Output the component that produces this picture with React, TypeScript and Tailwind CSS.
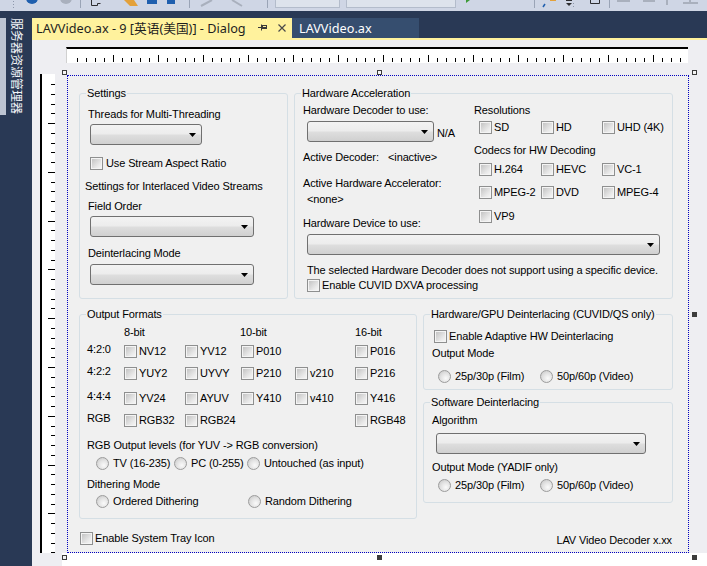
import type { ReactNode } from "react";

// Windows 7 style dialog controls, drawn at 96dpi sizes
function Check({ label, className = "", gap = "gap-[2px]" }: { label?: string; className?: string; gap?: string }) {
  return (
    <div className={`flex items-center ${gap} ${className}`}>
      <span className="w-[13px] h-[13px] shrink-0 border border-[#8e8f8f] bg-[#f4f4f4] p-[1px]">
        <span className="block w-full h-full bg-[linear-gradient(135deg,#c4c4c4,#e9e9e9_70%,#f4f4f4)]" />
      </span>
      {label && <span className="leading-[13px] whitespace-nowrap">{label}</span>}
    </div>
  );
}

function Radio({ label, className = "" }: { label: string; className?: string }) {
  return (
    <div className={`flex items-center gap-[4px] ${className}`}>
      <span className="w-[13px] h-[13px] shrink-0 rounded-full border border-[#9c9c9c] bg-[radial-gradient(circle_at_62%_66%,#fafafa_0%,#e2e2e2_50%,#c2c2c2_100%)]" />
      <span className="leading-[13px] whitespace-nowrap">{label}</span>
    </div>
  );
}

function Combo({ className = "" }: { className?: string }) {
  return (
    <div
      className={`h-[21px] rounded-[3px] border border-[#707070] bg-[linear-gradient(#f3f3f3,#ececec_48%,#dedede_52%,#d0d0d0)] flex items-center justify-end pr-[5px] ${className}`}
    >
      <svg width="7" height="4" viewBox="0 0 7 4" className="block">
        <path d="M0 0h7L3.5 4z" fill="#000" />
      </svg>
    </div>
  );
}

function Group({ title, className = "", children }: { title: string; className?: string; children?: ReactNode }) {
  return (
    <div className={`relative border border-[#d5dfe5] rounded-[3px] flex flex-col items-start ${className}`}>
      <span className="absolute left-[6px] -top-[7px] px-[1px] bg-[#f0f0f0] leading-[13px] whitespace-nowrap">{title}</span>
      {children}
    </div>
  );
}

function Toolbar() {
  return (
    <div className="h-[11px] bg-[#cfd6e5] shrink-0">
      <svg width="707" height="11" className="block">
        {[1, 4, 7].map((y) => (
          <rect key={y} x="13" y={y} width="1" height="1" fill="#8d97ab" />
        ))}
        <circle cx="32" cy="-2" r="6" fill="#1f5fae" />
        <circle cx="66" cy="-2" r="6" fill="#a9b0bd" />
        <rect x="80" y="0" width="1" height="8" fill="#9aa4b6" />
        <path d="M91.5 0v5.5h6v-2h3" stroke="#2d2d30" fill="none" />
        <path d="M124 0l6 6h8l-4-6z" fill="#e3a13b" />
        <rect x="147" y="0" width="10" height="4" fill="#1f5fae" />
        <rect x="167" y="0" width="8" height="4" fill="#1f5fae" />
        <rect x="189" y="0" width="1" height="8" fill="#9aa4b6" />
        <path d="M201 6l11-6M232 0l10 6" stroke="#a9b0bd" strokeWidth="2" />
        <rect x="267" y="0" width="1" height="8" fill="#9aa4b6" />
        <rect x="275.5" y="-1.5" width="64" height="9" fill="#dde3ec" stroke="#b3bccb" />
        <rect x="346.5" y="-1.5" width="109" height="9" fill="#dde3ec" stroke="#b3bccb" />
        <path d="M466 0h4l-4 3z" fill="#3c9a36" />
        <rect x="534" y="0" width="1" height="8" fill="#9aa4b6" />
        <path d="M545 4l-2 3" stroke="#1f5fae" strokeWidth="1.5" />
        <rect x="550" y="0" width="6" height="1" fill="#e3a13b" />
        <path d="M566 3h6l-3 3z" fill="#2d2d30" />
        <rect x="566" y="0" width="6" height="1" fill="#2d2d30" />
        <rect x="573" y="3" width="1" height="1" fill="#8d97ab" />
        <rect x="573" y="6" width="1" height="1" fill="#8d97ab" />
        <path d="M590.5 0v3.5h9V0" stroke="#2d2d30" fill="none" />
        <rect x="609" y="0" width="1" height="8" fill="#9aa4b6" />
        <rect x="617" y="0" width="13" height="2" fill="#a9b0bd" />
        <rect x="643" y="0" width="12" height="2" fill="#a9b0bd" />
        <rect x="666" y="0" width="2" height="5" fill="#a9b0bd" />
        <rect x="683" y="2" width="15" height="2" fill="#a9b0bd" />
        <rect x="689" y="0" width="2" height="3" fill="#a9b0bd" />
      </svg>
    </div>
  );
}

function SideBar() {
  return (
    <div className="w-[32px] shrink-0 bg-[#293955] pt-[7px]">
      <div className="flex">
        <div className="w-[6px] h-[97px] bg-[#bcc4d2]" />
        <span className="ml-[5px] text-[12px] leading-[12px] text-[#f2f4f8] [writing-mode:vertical-rl] [text-orientation:sideways] font-['Noto_Sans_CJK_SC',sans-serif]">
          服务器资源管理器
        </span>
      </div>
    </div>
  );
}

function Tabs() {
  return (
    <div className="h-[20px] flex font-['Noto_Sans','Noto_Sans_CJK_SC',sans-serif] text-[12.7px]">
      <div className="w-[260px] bg-[#fff29d] flex items-center pl-[4px] pr-[6px] text-[#1e1e1e]">
        <span className="whitespace-nowrap leading-[16px]">LAVVideo.ax - 9 [英语(美国)] - Dialog</span>
        <svg width="10" height="8" viewBox="0 0 10 8" className="ml-auto block">
          <path d="M0 3.5h3.5M3.5 0.5v6" stroke="#3a3a3a" fill="none" />
          <rect x="4.5" y="1.5" width="4" height="3" stroke="#3a3a3a" fill="none" />
          <path d="M4.5 3.5h4" stroke="#3a3a3a" />
        </svg>
        <svg width="8" height="8" viewBox="0 0 8 8" className="ml-[10px] block">
          <path d="M0.5 0.5l7 7M7.5 0.5l-7 7" stroke="#4a4a4a" strokeWidth="1.2" />
        </svg>
      </div>
      <div className="w-[127px] bg-[#364e6f] flex items-center pl-[7px] text-white">
        <span className="whitespace-nowrap leading-[16px]">LAVVideo.ax</span>
      </div>
    </div>
  );
}

function HRuler() {
  const ticks = Array.from({ length: 69 }, (_, i) => i);
  return (
    <div className="mt-[7px] ml-[34px] w-[622px] h-[16px] bg-white border-t-2 border-black border-l border-l-[#d0d0d0]">
      <svg width="621" height="14" className="block">
        {ticks.map((i) => {
          const x = 10.5 + i * 9;
          return <line key={i} x1={x} x2={x} y1={i % 5 === 4 ? 6 : 9} y2={13} stroke="#000" />;
        })}
      </svg>
    </div>
  );
}

function VRuler() {
  const ticks = Array.from({ length: 49 }, (_, i) => i);
  return (
    <div className="ml-[8px] mt-[11px] w-[15px] h-[479px] bg-white border-l-2 border-black">
      <svg width="13" height="479" className="block">
        {ticks.map((i) => {
          const y = Math.round(10 + i * 9.76) + 0.5;
          return <line key={i} x1={i % 5 === 4 ? 6 : 9} x2={13} y1={y} y2={y} stroke="#000" />;
        })}
      </svg>
    </div>
  );
}

const fmtRows = [
  { label: "4:2:0", mt: "mt-[6px]", cells: ["NV12", "YV12", "P010", "", "P016"] },
  { label: "4:2:2", mt: "mt-[9px]", cells: ["YUY2", "UYVY", "P210", "v210", "P216"] },
  { label: "4:4:4", mt: "mt-[12px]", cells: ["YV24", "AYUV", "Y410", "v410", "Y416"] },
  { label: "RGB", mt: "mt-[9px]", cells: ["RGB32", "RGB24", "", "", "RGB48"] },
];
const fmtColW = ["w-[61px]", "w-[56px]", "w-[54px]", "w-[60px]", "w-[60px]"];

function Dialog() {
  const hollow = "absolute w-[5px] h-[5px] border border-[#3c3c3c] bg-[#f4f4f4]";
  const filled = "absolute w-[5px] h-[5px] bg-[#3c3c3c]";
  return (
    <div className="relative ml-[12px] mt-[12px] w-[622px] h-[478px] border border-dotted border-[#0000c0] bg-[#f0f0f0] text-[11px] leading-[13px] tracking-[-0.12px] text-black">
      <span className={`${hollow} -left-[6px] -top-[6px]`} />
      <span className={`${hollow} left-[309px] -top-[6px]`} />
      <span className={`${hollow} left-[624px] -top-[6px]`} />
      <span className={`${filled} left-[624px] top-[236px]`} />
      <span className={`${hollow} -left-[6px] top-[479px]`} />
      <span className={`${filled} left-[309px] top-[479px]`} />
      <span className={`${filled} left-[624px] top-[479px]`} />

      <div className="flex flex-col pl-[11px] pt-[17px]">
        <div className="flex gap-[6px]">
          <Group title="Settings" className="w-[209px] h-[206px]">
            <span className="ml-[8px] mt-[14px]">Threads for Multi-Threading</span>
            <Combo className="ml-[10px] mt-[3px] w-[112px]" />
            <Check className="ml-[10px] mt-[12px]" gap="gap-[3px]" label="Use Stream Aspect Ratio" />
            <span className="ml-[5px] mt-[10px]">Settings for Interlaced Video Streams</span>
            <span className="ml-[8px] mt-[7px]">Field Order</span>
            <Combo className="ml-[10px] mt-[3px] w-[164px]" />
            <span className="ml-[8px] mt-[10px]">Deinterlacing Mode</span>
            <Combo className="ml-[10px] mt-[4px] w-[164px]" />
          </Group>

          <Group title="Hardware Acceleration" className="w-[379px] h-[206px]">
            <div className="flex">
              <div className="flex flex-col items-start w-[179px] pl-[8px]">
                <span className="mt-[10px]">Hardware Decoder to use:</span>
                <div className="flex items-center mt-[4px] ml-[4px]">
                  <Combo className="w-[127px]" />
                  <span className="ml-[3px] mt-[3px]">N/A</span>
                </div>
                <div className="flex mt-[9px]">
                  <span className="w-[85px]">Active Decoder:</span>
                  <span>&lt;inactive&gt;</span>
                </div>
                <span className="mt-[13px]">Active Hardware Accelerator:</span>
                <span className="mt-[3px] ml-[4px]">&lt;none&gt;</span>
                <span className="mt-[11px]">Hardware Device to use:</span>
              </div>
              <div className="flex flex-col items-start">
                <span className="mt-[10px]">Resolutions</span>
                <div className="flex mt-[4px] ml-[5px]">
                  <Check className="w-[62px]" label="SD" />
                  <Check className="w-[61px]" label="HD" />
                  <Check label="UHD (4K)" />
                </div>
                <span className="mt-[10px]">Codecs for HW Decoding</span>
                <div className="flex mt-[6px] ml-[5px]">
                  <Check className="w-[62px]" label="H.264" />
                  <Check className="w-[61px]" label="HEVC" />
                  <Check label="VC-1" />
                </div>
                <div className="flex mt-[10px] ml-[5px]">
                  <Check className="w-[62px]" label="MPEG-2" />
                  <Check className="w-[61px]" label="DVD" />
                  <Check label="MPEG-4" />
                </div>
                <div className="flex mt-[11px] ml-[5px]">
                  <Check label="VP9" />
                </div>
              </div>
            </div>
            <Combo className="ml-[12px] mt-[4px] w-[353px]" />
            <span className="ml-[12px] mt-[9px] whitespace-nowrap">
              The selected Hardware Decoder does not support using a specific device.
            </span>
            <Check className="ml-[12px] mt-[2px]" label="Enable CUVID DXVA processing" />
          </Group>
        </div>

        <div className="flex gap-[6px] mt-[15px]">
          <Group title="Output Formats" className="w-[338px] h-[205px]">
            <div className="flex pl-[44px] mt-[11px]">
              <span className="w-[116px]">8-bit</span>
              <span className="w-[115px]">10-bit</span>
              <span>16-bit</span>
            </div>
            {fmtRows.map((row) => (
              <div key={row.label} className={`flex items-start pl-[7px] ${row.mt}`}>
                <span className="w-[37px] -mt-[2px]">{row.label}</span>
                {row.cells.map((c, i) => (
                  <div key={i} className={fmtColW[i]}>
                    {c && <Check label={c} />}
                  </div>
                ))}
              </div>
            ))}
            <span className="ml-[7px] mt-[12px]">RGB Output levels (for YUV -&gt; RGB conversion)</span>
            <div className="flex ml-[16px] mt-[5px]">
              <Radio className="w-[78px]" label="TV (16-235)" />
              <Radio className="w-[73px]" label="PC (0-255)" />
              <Radio label="Untouched (as input)" />
            </div>
            <span className="ml-[7px] mt-[8px]">Dithering Mode</span>
            <div className="flex ml-[16px] mt-[4px]">
              <Radio className="w-[152px]" label="Ordered Dithering" />
              <Radio label="Random Dithering" />
            </div>
          </Group>

          <div className="flex flex-col">
            <Group title="Hardware/GPU Deinterlacing (CUVID/QS only)" className="w-[250px] h-[76px]">
              <Check className="ml-[10px] mt-[15px]" label="Enable Adaptive HW Deinterlacing" />
              <span className="ml-[8px] mt-[4px]">Output Mode</span>
              <div className="flex ml-[14px] mt-[10px]">
                <Radio className="w-[102px]" label="25p/30p (Film)" />
                <Radio label="50p/60p (Video)" />
              </div>
            </Group>
            <Group title="Software Deinterlacing" className="w-[250px] h-[101px] mt-[12px]">
              <span className="ml-[8px] mt-[11px]">Algorithm</span>
              <Combo className="ml-[12px] mt-[6px] w-[210px]" />
              <span className="ml-[8px] mt-[7px]">Output Mode (YADIF only)</span>
              <div className="flex ml-[14px] mt-[5px]">
                <Radio className="w-[102px]" label="25p/30p (Film)" />
                <Radio label="50p/60p (Video)" />
              </div>
            </Group>
          </div>
        </div>

        <div className="flex items-start justify-between mt-[13px] pr-[16px]">
          <Check className="ml-[1px]" label="Enable System Tray Icon" />
          <span className="mt-[2px]">LAV Video Decoder x.xx</span>
        </div>
      </div>
    </div>
  );
}

function Designer() {
  return (
    <div className="flex-1 flex flex-col bg-[#eeeef2] min-h-0">
      <HRuler />
      <div className="flex">
        <VRuler />
        <Dialog />
      </div>
      <div className="flex-1 flex">
        <div className="w-[30px]" />
        <div className="flex-1 bg-white" />
      </div>
    </div>
  );
}

export default function App() {
  return (
    <div className="w-[707px] h-[566px] overflow-hidden flex flex-col bg-[#293955] font-['Liberation_Sans',Arial,sans-serif]">
      <Toolbar />
      <div className="flex flex-1 min-h-0">
        <SideBar />
        <div className="flex-1 flex flex-col min-w-0">
          <div className="h-[7px] shrink-0" />
          <Tabs />
          <div className="h-[2px] shrink-0 bg-[#fff29d]" />
          <Designer />
        </div>
      </div>
    </div>
  );
}
